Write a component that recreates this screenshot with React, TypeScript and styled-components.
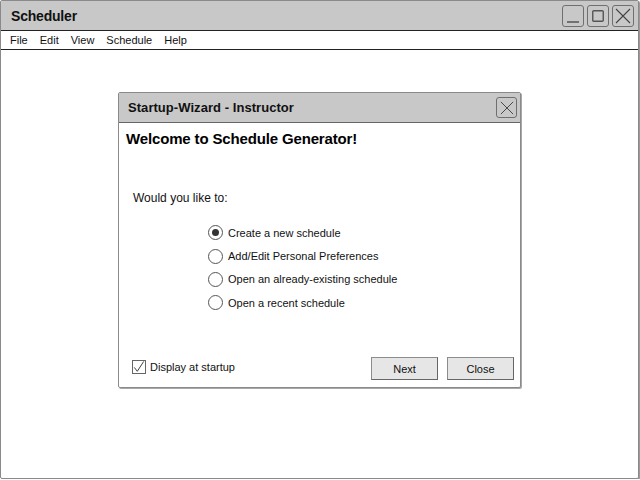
import { FC } from 'react';
import styled, { createGlobalStyle } from 'styled-components';

const GlobalStyle = createGlobalStyle`
  html, body {
    margin: 0;
    padding: 0;
    background: #ffffff;
  }
  body {
    font-family: 'Liberation Sans', Arial, sans-serif;
    color: #111;
  }
`;

const Window = styled.div`
  width: 637px;
  height: 477px;
  display: flex;
  flex-direction: column;
  border: 1px solid #8a8a8a;
  border-radius: 2px;
  box-shadow: 1px 1px 0 #9a9a9a;
  background: #fff;
  overflow: hidden;
`;

const TitleBar = styled.div`
  height: 29px;
  display: flex;
  align-items: center;
  justify-content: space-between;
  padding: 0 4px 0 10px;
  background: #c8c8c8;
  border-bottom: 1px solid #222;
`;

const WindowTitle = styled.span`
  font-size: 14px;
  font-weight: bold;
  letter-spacing: -0.2px;
`;

const ControlGroup = styled.div`
  display: flex;
  gap: 3px;
`;

const ControlButton = styled.div<{ $size: number }>`
  width: ${({ $size }) => $size}px;
  height: ${({ $size }) => $size}px;
  box-sizing: border-box;
  border: 1px solid #6f6f6f;
  border-radius: 3px;
  background: #c8c8c8;
  display: flex;
  align-items: center;
  justify-content: center;

  svg {
    display: block;
  }
`;

const MenuBar = styled.div`
  height: 18px;
  display: flex;
  align-items: center;
  padding: 0 0 0 9px;
  border-bottom: 1px solid #222;
  font-size: 11px;
`;

const MenuItem = styled.span`
  margin-right: 12px;
`;

const Desktop = styled.div`
  flex: 1;
  padding: 42px 0 0 117px;
`;

const Dialog = styled.div`
  width: 401px;
  height: 294px;
  display: flex;
  flex-direction: column;
  border: 1px solid #8a8a8a;
  border-radius: 2px;
  box-shadow: 1px 1px 0 #a8a8a8;
  background: #fff;
`;

const DialogTitleBar = styled.div`
  height: 29px;
  display: flex;
  align-items: center;
  justify-content: space-between;
  padding: 0 3px 0 9px;
  background: #c8c8c8;
  border-bottom: 1px solid #666;
`;

const DialogTitle = styled.span`
  font-size: 13px;
  font-weight: bold;
  letter-spacing: 0.05px;
`;

const DialogBody = styled.div`
  flex: 1;
  display: flex;
  flex-direction: column;
  padding: 7px 6px 7px 7px;
`;

const Heading = styled.h1`
  margin: 0;
  font-size: 15px;
  line-height: 18px;
  font-weight: bold;
  letter-spacing: -0.15px;
  color: #000;
`;

const Prompt = styled.p`
  margin: 42px 0 0 7px;
  font-size: 12px;
  line-height: 16px;
`;

const OptionList = styled.div`
  margin: 15px 0 0 82px;
  display: flex;
  flex-direction: column;
`;

const OptionRow = styled.label`
  height: 23.4px;
  display: flex;
  align-items: center;
  gap: 5px;
  font-size: 11px;
`;

const Radio = styled.span<{ $checked: boolean }>`
  width: 15px;
  height: 15px;
  box-sizing: border-box;
  border: 1px solid #555;
  border-radius: 50%;
  display: flex;
  align-items: center;
  justify-content: center;

  &::after {
    content: '';
    width: 7px;
    height: 7px;
    border-radius: 50%;
    background: #333;
    display: ${({ $checked }) => ($checked ? 'block' : 'none')};
  }
`;

const Footer = styled.div`
  margin-top: auto;
  display: flex;
  align-items: center;
  justify-content: space-between;
  padding-left: 6px;
`;

const CheckRow = styled.label`
  display: flex;
  align-items: center;
  gap: 4px;
  font-size: 11px;
  margin-top: -3px;
`;

const CheckBox = styled.span`
  width: 14px;
  height: 14px;
  box-sizing: border-box;
  border: 1px solid #666;
  display: flex;
  align-items: center;
  justify-content: center;
  overflow: visible;

  svg {
    display: block;
  }
`;

const ButtonRow = styled.div`
  display: flex;
  gap: 9px;
`;

const Button = styled.button`
  width: 67px;
  height: 23px;
  box-sizing: border-box;
  border: 1px solid #8c8c8c;
  border-right-color: #666;
  border-bottom-color: #666;
  background: #e6e6e6;
  font-family: 'Liberation Sans', Arial, sans-serif;
  font-size: 11px;
  color: #111;
  padding: 0;
`;

const CloseGlyph: FC<{ size: number }> = ({ size }) => (
  <svg width={size} height={size} viewBox="0 0 16 16">
    <path d="M1 1 L15 15 M15 1 L1 15" stroke="#444" strokeWidth="1.1" fill="none" />
  </svg>
);

const options = [
  'Create a new schedule',
  'Add/Edit Personal Preferences',
  'Open an already-existing schedule',
  'Open a recent schedule',
];

const menus = ['File', 'Edit', 'View', 'Schedule', 'Help'];

export default function App() {
  return (
    <>
      <GlobalStyle />
      <Window>
        <TitleBar>
          <WindowTitle>Scheduler</WindowTitle>
          <ControlGroup>
            <ControlButton $size={22}>
              <svg width="12" height="14" viewBox="0 0 12 14">
                <path d="M0 13 H12" stroke="#555" strokeWidth="1.4" />
              </svg>
            </ControlButton>
            <ControlButton $size={22}>
              <svg width="12" height="12" viewBox="0 0 12 12">
                <rect x="0.75" y="0.75" width="10.5" height="10.5" rx="1" stroke="#555" strokeWidth="1.4" fill="none" />
              </svg>
            </ControlButton>
            <ControlButton $size={22}>
              <CloseGlyph size={16} />
            </ControlButton>
          </ControlGroup>
        </TitleBar>
        <MenuBar>
          {menus.map((m) => (
            <MenuItem key={m}>{m}</MenuItem>
          ))}
        </MenuBar>
        <Desktop>
          <Dialog>
            <DialogTitleBar>
              <DialogTitle>Startup-Wizard - Instructor</DialogTitle>
              <ControlButton $size={21}>
                <CloseGlyph size={14} />
              </ControlButton>
            </DialogTitleBar>
            <DialogBody>
              <Heading>Welcome to Schedule Generator!</Heading>
              <Prompt>Would you like to:</Prompt>
              <OptionList>
                {options.map((o, i) => (
                  <OptionRow key={o}>
                    <Radio $checked={i === 0} />
                    {o}
                  </OptionRow>
                ))}
              </OptionList>
              <Footer>
                <CheckRow>
                  <CheckBox>
                    <svg width="14" height="14" viewBox="0 0 14 14">
                      <path d="M1.5 7.5 L5 12 L12.5 0.5" stroke="#333" strokeWidth="1.1" fill="none" />
                    </svg>
                  </CheckBox>
                  Display at startup
                </CheckRow>
                <ButtonRow>
                  <Button>Next</Button>
                  <Button>Close</Button>
                </ButtonRow>
              </Footer>
            </DialogBody>
          </Dialog>
        </Desktop>
      </Window>
    </>
  );
}
